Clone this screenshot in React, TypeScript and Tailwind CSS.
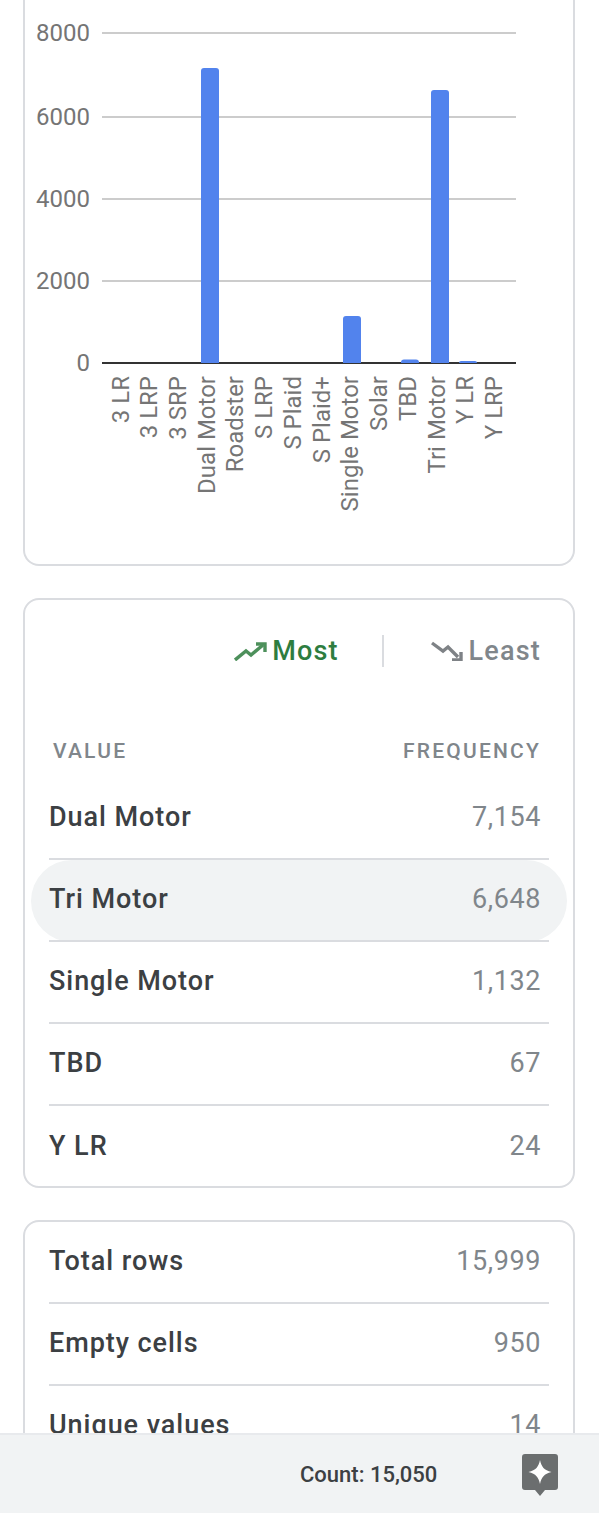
const BARS = [
  { label: "3 LR" },
  { label: "3 LRP" },
  { label: "3 SRP" },
  { label: "Dual Motor", x: 201, h: 295 },
  { label: "Roadster" },
  { label: "S LRP" },
  { label: "S Plaid" },
  { label: "S Plaid+" },
  { label: "Single Motor", x: 343, h: 47 },
  { label: "Solar" },
  { label: "TBD", x: 401, h: 3.5 },
  { label: "Tri Motor", x: 431, h: 273 },
  { label: "Y LR", x: 459, h: 2 },
  { label: "Y LRP" },
];

const TICKS = [
  { label: "8000", y: 33 },
  { label: "6000", y: 117 },
  { label: "4000", y: 199 },
  { label: "2000", y: 281 },
  { label: "0", y: 363 },
];

const FREQUENCIES = [
  { label: "Dual Motor", value: "7,154" },
  { label: "Tri Motor", value: "6,648", active: true },
  { label: "Single Motor", value: "1,132" },
  { label: "TBD", value: "67" },
  { label: "Y LR", value: "24" },
];

const STATS = [
  { label: "Total rows", value: "15,999" },
  { label: "Empty cells", value: "950" },
  { label: "Unique values", value: "14" },
];

function Chart() {
  const zeroY = 363;
  return (
    <svg width="552" height="566" viewBox="23 0 552 566" className="block -ml-[2px]">
      {TICKS.map((t) => (
        <g key={t.label}>
          {t.y !== zeroY && <line x1={102} x2={516} y1={t.y} y2={t.y} stroke="#cccccc" strokeWidth={2} />}
          <text x={90} y={t.y + 8} textAnchor="end" fontSize={24} fill="#757575" fontFamily="Roboto, sans-serif">
            {t.label}
          </text>
        </g>
      ))}
      <line x1={102} x2={516} y1={zeroY} y2={zeroY} stroke="#333333" strokeWidth={2} />
      {BARS.map((b, i) => {
        const r = Math.min(3, b.h ?? 0);
        return (
          <g key={b.label}>
            {b.x !== undefined && b.h !== undefined && (
              <path
                d={`M${b.x} ${zeroY}V${zeroY - b.h + r}Q${b.x} ${zeroY - b.h} ${b.x + r} ${zeroY - b.h}H${b.x + 18 - r}Q${b.x + 18} ${zeroY - b.h} ${b.x + 18} ${zeroY - b.h + r}V${zeroY}Z`}
                fill="#5283ed"
              />
            )}
            <text
              transform={`translate(${120.5 + i * 28.73} 376) rotate(-90)`}
              textAnchor="end"
              dominantBaseline="central"
              fontSize={24}
              fill="#757575"
              fontFamily="Roboto, sans-serif"
            >
              {b.label}
            </text>
          </g>
        );
      })}
    </svg>
  );
}

function Row({ label, value, active, last }: { label: string; value: string; active?: boolean; last?: boolean }) {
  return (
    <div className="relative">
      {active && <div className="absolute -left-[18px] -right-[18px] inset-y-0 rounded-[41px] bg-[#f1f3f4]" />}
      <div className={`relative flex h-[82px] items-center justify-between pb-[1px] pr-[8px] ${last ? "" : "border-b-2 border-[#dadce0]"}`}>
        <span className="text-[27px] font-medium tracking-[0.95px] text-[#3c4043]">{label}</span>
        <span className="text-[27px] tracking-[0.6px] text-[#80868b]">{value}</span>
      </div>
    </div>
  );
}

export default function App() {
  return (
    <div className="flex h-[1513px] w-[599px] flex-col overflow-hidden bg-white font-['Roboto',sans-serif]">
      <div className="h-[1433px] overflow-hidden pl-[23px] pr-[24px]">
        {/* Chart card, scrolled past its top edge */}
        <div className="h-[566px] overflow-hidden rounded-b-[16px] border-2 border-t-0 border-[#dadce0]">
          <Chart />
        </div>

        {/* Most / least frequent */}
        <div className="mt-[32px] h-[590px] rounded-[16px] border-2 border-[#dadce0] px-[24px]">
          <div className="flex h-[102px] items-center justify-end pr-[8px]">
            <div className="flex items-center gap-[4px] text-[#2e7d3f]">
              <svg width="34" height="20" viewBox="0 0 34 20" fill="none" stroke="currentColor" strokeWidth="3.4" opacity="0.85">
                <path d="M1 19l11-9 5 4 12-10" />
                <path d="M22 3h9v8" />
              </svg>
              <span className="text-[27px] font-medium tracking-[1.1px]">Most</span>
            </div>
            <div className="ml-[43px] mr-[47px] h-[32px] w-[2px] bg-[#dadce0]" />
            <div className="flex items-center gap-[4px] text-[#80868b]">
              <svg width="34" height="20" viewBox="0 0 34 20" fill="none" stroke="#5f6368" strokeWidth="3.4" opacity="0.8">
                <path d="M1 2l11 8 5-4 10 10" />
                <path d="M30 11v8h-9" />
              </svg>
              <span className="text-[27px] font-medium tracking-[1.2px]">Least</span>
            </div>
          </div>
          <div className="flex h-[60px] items-center justify-between pl-[4px] pr-[8px] pt-[40px]">
            <span className="text-[21px] font-medium tracking-[2.2px] text-[#80868b]">VALUE</span>
            <span className="text-[21px] font-medium tracking-[2.2px] text-[#80868b]">FREQUENCY</span>
          </div>
          <div className="mt-[16px]">
            {FREQUENCIES.map((f, i) => (
              <Row key={f.label} label={f.label} value={f.value} active={f.active} last={i === FREQUENCIES.length - 1} />
            ))}
          </div>
        </div>

        {/* Column stats */}
        <div className="mt-[32px] rounded-[16px] border-2 border-[#dadce0] px-[24px]">
          {STATS.map((s) => (
            <Row key={s.label} label={s.label} value={s.value} />
          ))}
        </div>
      </div>

      {/* Bottom status bar */}
      <div className="flex h-[80px] items-center border-t-2 border-[#e8eaed] bg-[#f1f3f4] pl-[300px]">
        <span className="text-[22px] font-medium text-[#3c4043]">Count: 15,050</span>
        <svg width="36" height="42" viewBox="0 0 36 42" className="ml-[85px] mt-[2px]">
          <path d="M3 0h30a3 3 0 0 1 3 3v30a3 3 0 0 1-3 3h-10l-5 6-5-6H3a3 3 0 0 1-3-3V3a3 3 0 0 1 3-3z" fill="#6b6e6f" />
          <path d="M18 6c1.500 7 4 10 11.500 12-7.500 2-10 5-11.500 12-1.500-7-4-10-11.500-12 7.500-2 10-5 11.500-12z" fill="#ffffff" />
        </svg>
      </div>
    </div>
  );
}
